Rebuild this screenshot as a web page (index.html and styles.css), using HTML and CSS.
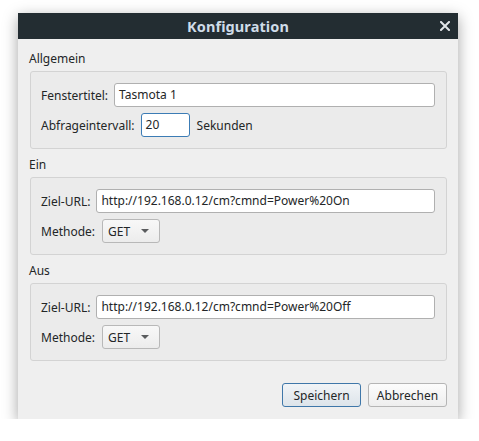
FILE: index.html
```html
<!DOCTYPE html>
<html lang="de">
<head>
<meta charset="utf-8">
<title>Konfiguration</title>
<link rel="stylesheet" href="styles.css">
</head>
<body>
<div class="window">
  <div class="titlebar">
    <span class="title">Konfiguration</span>
    <svg class="close" width="10" height="10" viewBox="0 0 10 10"><path d="M1 1 L9 9 M9 1 L1 9" stroke="#e1e5e8" stroke-width="2" stroke-linecap="square"/></svg>
  </div>
  <div class="content">
    <div class="group-label">Allgemein</div>
    <div class="group">
      <div class="row"><span class="lbl">Fenstertitel:</span><div class="input grow">Tasmota 1</div></div>
      <div class="row"><span class="lbl">Abfrageintervall:</span><div class="input small focus">20</div><span class="suffix">Sekunden</span></div>
    </div>
    <div class="group-label">Ein</div>
    <div class="group">
      <div class="row"><span class="lbl">Ziel-URL:</span><div class="input grow">http://192.168.0.12/cm?cmnd=Power%20On</div></div>
      <div class="row"><span class="lbl">Methode:</span><div class="combo"><span>GET</span><span class="arrow"></span></div></div>
    </div>
    <div class="group-label">Aus</div>
    <div class="group">
      <div class="row"><span class="lbl">Ziel-URL:</span><div class="input grow">http://192.168.0.12/cm?cmnd=Power%20Off</div></div>
      <div class="row"><span class="lbl">Methode:</span><div class="combo"><span>GET</span><span class="arrow"></span></div></div>
    </div>
    <div class="buttons">
      <div class="btn primary">Speichern</div>
      <div class="btn">Abbrechen</div>
    </div>
  </div>
</div>
</body>
</html>
```
FILE: styles.css
```css
html, body {
  margin: 0;
  padding: 0;
  background: #ffffff;
}
body {
  padding: 13px 0 0 18px;
  font-family: "Noto Sans", "DejaVu Sans", sans-serif;
  font-size: 12px;
  color: #232627;
}
.window {
  width: 440px;
  background: #efefef;
  box-shadow: 0 4px 14px rgba(0, 0, 0, 0.36);
}
.titlebar {
  height: 26px;
  background: #232d32;
  display: flex;
  align-items: center;
  justify-content: center;
  position: relative;
}
.title {
  font-weight: bold;
  font-size: 14.5px;
  color: #cfdce8;
  letter-spacing: 0.1px;
}
.close {
  position: absolute;
  right: 8px;
  top: 8px;
}
.content {
  padding: 11px 11px 12px 12px;
}
.group-label {
  height: 18px;
  line-height: 18px;
  margin: 0 0 3px -1px;
}
.group {
  background: #ebebeb;
  border: 1px solid #d3d3d3;
  border-radius: 3px;
  padding: 11px 11px 11px 10px;
  display: flex;
  flex-direction: column;
  gap: 6px;
  margin-bottom: 7px;
}
.row {
  display: flex;
  align-items: center;
  gap: 6px;
  height: 24px;
}
.lbl {
  white-space: nowrap;
}
.input {
  box-sizing: border-box;
  height: 24px;
  background: #ffffff;
  border: 1px solid #b0b0b0;
  border-radius: 3px;
  padding: 0 4px;
  line-height: 22px;
  white-space: nowrap;
  overflow: hidden;
}
.grow {
  flex: 1;
}
.small {
  width: 49px;
}
.focus {
  border-color: #3c7cb5;
}
.suffix {
  margin-left: 1px;
}
.combo {
  box-sizing: border-box;
  width: 58px;
  height: 24px;
  margin-left: 1px;
  border: 1px solid #b8b8b8;
  border-radius: 3px;
  background: linear-gradient(#f8f8f8, #ececec);
  display: flex;
  align-items: center;
  justify-content: space-between;
  padding: 0 10px 0 5px;
}
.arrow {
  width: 0;
  height: 0;
  border-left: 4px solid transparent;
  border-right: 4px solid transparent;
  border-top: 4px solid #5a5c5e;
}
.buttons {
  display: flex;
  justify-content: flex-end;
  gap: 7px;
  margin-top: 22px;
}
.btn {
  box-sizing: border-box;
  width: 79px;
  height: 24px;
  border: 1px solid #b5b5b5;
  border-radius: 3px;
  background: linear-gradient(#fcfcfc, #eeeeee);
  display: flex;
  align-items: center;
  justify-content: center;
}
.btn.primary {
  border-color: #3f77a9;
  background: linear-gradient(#f1f4f7, #dde4ea);
}
```
